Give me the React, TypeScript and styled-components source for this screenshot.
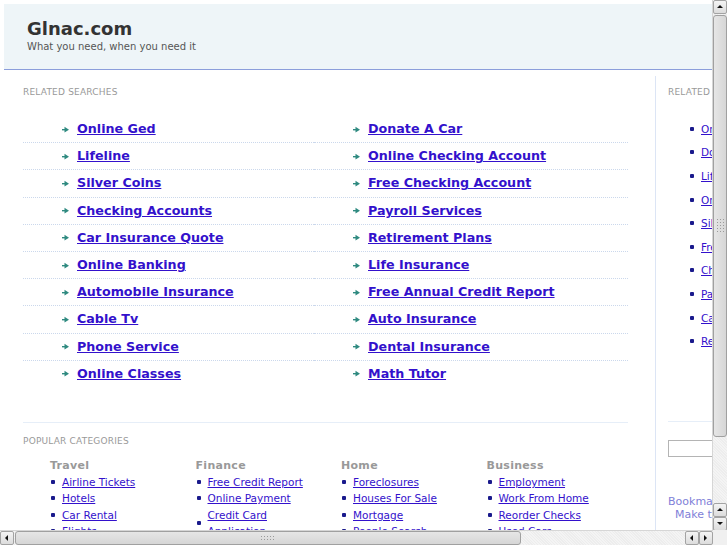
import React from "react";
import styled, { createGlobalStyle } from "styled-components";

const related = [
    ["Online Ged", "Donate A Car"],
    ["Lifeline", "Online Checking Account"],
    ["Silver Coins", "Free Checking Account"],
    ["Checking Accounts", "Payroll Services"],
    ["Car Insurance Quote", "Retirement Plans"],
    ["Online Banking", "Life Insurance"],
    ["Automobile Insurance", "Free Annual Credit Report"],
    ["Cable Tv", "Auto Insurance"],
    ["Phone Service", "Dental Insurance"],
    ["Online Classes", "Math Tutor"],
];

const sideLinks = [
    "Online Ged",
    "Donate A Car",
    "Lifeline",
    "Online Checking Account",
    "Silver Coins",
    "Free Checking Account",
    "Checking Accounts",
    "Payroll Services",
    "Car Insurance Quote",
    "Retirement Plans",
];

const categories = [
    { title: "Travel", links: ["Airline Tickets", "Hotels", "Car Rental", "Flights", "Cheap Tickets"] },
    { title: "Finance", links: ["Free Credit Report", "Online Payment", "Credit Card Application", "Insurance"] },
    { title: "Home", links: ["Foreclosures", "Houses For Sale", "Mortgage", "People Search", "Real Estate"] },
    { title: "Business", links: ["Employment", "Work From Home", "Reorder Checks", "Used Cars", "Small Business"] },
];

const GlobalStyle = createGlobalStyle`
    html, body {
        margin: 0;
        padding: 0;
        overflow: hidden;
        background: #fff;
        font-family: "DejaVu Sans", Verdana, sans-serif;
    }
`;

const Page = styled.div`
    width: 900px;
    padding: 4px 0 0 4px;
`;

const Header = styled.div`
    height: 66px;
    box-sizing: border-box;
    background: #eef5f8;
    border-bottom: 1px solid #8b9edb;
    padding: 14px 0 0 23px;
`;

const Title = styled.div`
    font-size: 18px;
    font-weight: bold;
    color: #333;
    line-height: 22px;
`;

const Tagline = styled.div`
    font-size: 10px;
    color: #555;
    line-height: 13px;
`;

const Content = styled.div`
    display: flex;
    align-items: flex-start;
`;

const Main = styled.div`
    width: 651px;
    box-sizing: border-box;
    padding: 0 27px 0 19px;
`;

const Label = styled.div`
    font-size: 9px;
    line-height: 11px;
    color: #999;
    text-transform: uppercase;
    letter-spacing: 0.2px;
`;

const TopLabel = styled(Label)`
    margin-top: 17px;
`;

const Grid = styled.div`
    display: grid;
    grid-template-columns: 291px 1fr;
    margin-top: 18px;
`;

const Cell = styled.div<{ $last?: boolean }>`
    display: flex;
    align-items: center;
    padding: 5.1px 0 5.1px 39px;
    line-height: 16px;
    border-bottom: ${(p) => (p.$last ? "none" : "1px dotted #cbd8ec")};
`;

const Arrow = styled.svg`
    width: 7px;
    height: 7px;
    margin-right: 8px;
    flex-shrink: 0;
`;

const BigLink = styled.a`
    font-size: 12.7px;
    font-weight: bold;
    color: #3311cc;
    text-decoration: underline;
    cursor: pointer;
`;

const Divider = styled.div`
    border-top: 1px solid #e6eef8;
    margin-top: 35px;
`;

const PopLabel = styled(Label)`
    margin-top: 13px;
`;

const Cats = styled.div`
    display: grid;
    grid-template-columns: repeat(4, 145.5px);
    padding-left: 27px;
    margin-top: 12px;
`;

const CatTitle = styled.div`
    font-size: 11px;
    font-weight: bold;
    color: #999;
    line-height: 14px;
    letter-spacing: 0.3px;
`;

const CatList = styled.ul`
    list-style: none;
    margin: 1px 0 0;
    padding: 0;
`;

const CatItem = styled.li`
    display: flex;
    align-items: center;
    line-height: 16.4px;
    padding-right: 20px;
`;

const Dot = styled.span`
    width: 4px;
    height: 4px;
    border-radius: 1px;
    background: #1a1a8c;
    margin: 0 7px 0 1px;
    flex-shrink: 0;
`;

const SmallLink = styled.a`
    font-size: 10.5px;
    color: #3311cc;
    text-decoration: underline;
    cursor: pointer;
`;

const Side = styled.div`
    width: 240px;
    margin-top: 6px;
    border-left: 1px solid #dce5f5;
    padding-left: 12px;
    min-height: 480px;
`;

const SideLabel = styled(Label)`
    margin-top: 11px;
`;

const SideList = styled.ul`
    list-style: none;
    margin: 19px 0 0 0;
    padding: 0 0 0 21px;
`;

const SideItem = styled.li`
    display: flex;
    align-items: center;
    height: 23.6px;
`;

const SideDivider = styled.div`
    border-top: 1px solid #e6eef8;
    margin-top: 68px;
`;

const SearchBox = styled.input`
    display: block;
    margin-top: 18px;
    width: 150px;
    height: 17px;
    box-sizing: border-box;
    border: 1px solid #b4b4b4;
    background: #fff;
`;

const Bookmark = styled.div`
    margin-top: 38px;
    font-size: 11px;
    line-height: 13px;
    color: #7f7fd8;
    white-space: nowrap;
`;

const BookmarkLine = styled.div<{ $indent?: number }>`
    padding-left: ${(p) => p.$indent ?? 0}px;
`;

/* fake browser scrollbars, drawn over the page */
const VBar = styled.div`
    position: fixed;
    top: 0;
    right: 0;
    width: 14px;
    bottom: 14px;
    display: flex;
    flex-direction: column;
    background: repeating-linear-gradient(45deg, #ededed 0 1px, #f4f4f4 1px 2px);
    border-left: 1px solid #d6d6d6;
`;

const HBar = styled.div`
    position: fixed;
    left: 0;
    bottom: 0;
    right: 14px;
    height: 15px;
    display: flex;
    background: repeating-linear-gradient(45deg, #ededed 0 1px, #f4f4f4 1px 2px);
    border-top: 1px solid #d6d6d6;
    box-sizing: border-box;
`;

const Corner = styled.div`
    position: fixed;
    right: 0;
    bottom: 0;
    width: 14px;
    height: 15px;
    background: #f0f0f0;
`;

const Btn = styled.div`
    width: 14px;
    height: 14px;
    box-sizing: border-box;
    border: 1px solid #a3a3a3;
    border-radius: 2px;
    background: linear-gradient(#f4f4f4, #dcdcdc);
    display: flex;
    align-items: center;
    justify-content: center;
    flex-shrink: 0;
`;

const Thumb = styled.div<{ $vertical?: boolean }>`
    box-sizing: border-box;
    border: 1px solid #a0a0a0;
    border-radius: 3px;
    background: ${(p) =>
        p.$vertical ? "linear-gradient(90deg, #e6e6e6, #d6d6d6)" : "linear-gradient(#e6e6e6, #d6d6d6)"};
    display: flex;
    align-items: center;
    justify-content: center;
    flex-shrink: 0;
`;

const Grip = styled.div<{ $vertical?: boolean }>`
    width: ${(p) => (p.$vertical ? "8px" : "16px")};
    height: ${(p) => (p.$vertical ? "16px" : "7px")};
    background-image: radial-gradient(#9a9a9a 0.6px, transparent 0.8px);
    background-size: 3px 3px;
`;

const Spacer = styled.div`
    flex: 1;
`;

const Tri = ({ dir }: { dir: "up" | "down" | "left" | "right" }) => {
    const pts = {
        up: "1,5 4,2 7,5",
        down: "1,2 4,5 7,2",
        left: "5,1 2,4 5,7",
        right: "2,1 5,4 2,7",
    }[dir];
    return (
        <svg width="8" height="8" viewBox="0 0 8 8">
            <polygon points={pts} fill="#111" />
        </svg>
    );
};

const ArrowIcon = () => (
    <Arrow viewBox="0 0 7 7">
        <rect x="0" y="3" width="3" height="1.4" fill="#2f8a80" />
        <polygon points="2.5,0.8 7,3.7 2.5,6.4" fill="#2f8a80" />
    </Arrow>
);

const App = () => {
    return (
        <>
            <GlobalStyle />
            <Page>
                <Header>
                    <Title>Glnac.com</Title>
                    <Tagline>What you need, when you need it</Tagline>
                </Header>
                <Content>
                    <Main>
                        <TopLabel>Related Searches</TopLabel>
                        <Grid>
                            {related.map((pair, i) =>
                                pair.map((text) => (
                                    <Cell key={text} $last={i === related.length - 1}>
                                        <ArrowIcon />
                                        <BigLink>{text}</BigLink>
                                    </Cell>
                                )),
                            )}
                        </Grid>
                        <Divider />
                        <PopLabel>Popular Categories</PopLabel>
                        <Cats>
                            {categories.map((cat) => (
                                <div key={cat.title}>
                                    <CatTitle>{cat.title}</CatTitle>
                                    <CatList>
                                        {cat.links.map((l) => (
                                            <CatItem key={l}>
                                                <Dot />
                                                <SmallLink>{l}</SmallLink>
                                            </CatItem>
                                        ))}
                                    </CatList>
                                </div>
                            ))}
                        </Cats>
                    </Main>
                    <Side>
                        <SideLabel>Related Searches</SideLabel>
                        <SideList>
                            {sideLinks.map((l) => (
                                <SideItem key={l}>
                                    <Dot />
                                    <SmallLink>{l}</SmallLink>
                                </SideItem>
                            ))}
                        </SideList>
                        <SideDivider />
                        <SearchBox />
                        <Bookmark>
                            <BookmarkLine>Bookmark this page</BookmarkLine>
                            <BookmarkLine $indent={7}>Make this Homepage</BookmarkLine>
                        </Bookmark>
                    </Side>
                </Content>
            </Page>
            <VBar>
                <Btn>
                    <Tri dir="up" />
                </Btn>
                <Thumb $vertical style={{ height: 422, marginTop: 1 }}>
                    <Grip $vertical />
                </Thumb>
                <Spacer />
                <Btn>
                    <Tri dir="up" />
                </Btn>
                <Btn>
                    <Tri dir="down" />
                </Btn>
            </VBar>
            <HBar>
                <Btn>
                    <Tri dir="left" />
                </Btn>
                <Thumb style={{ width: 506, marginLeft: 1 }}>
                    <Grip />
                </Thumb>
                <Spacer />
                <Btn>
                    <Tri dir="left" />
                </Btn>
                <Btn>
                    <Tri dir="right" />
                </Btn>
            </HBar>
            <Corner />
        </>
    );
};

export default App;
